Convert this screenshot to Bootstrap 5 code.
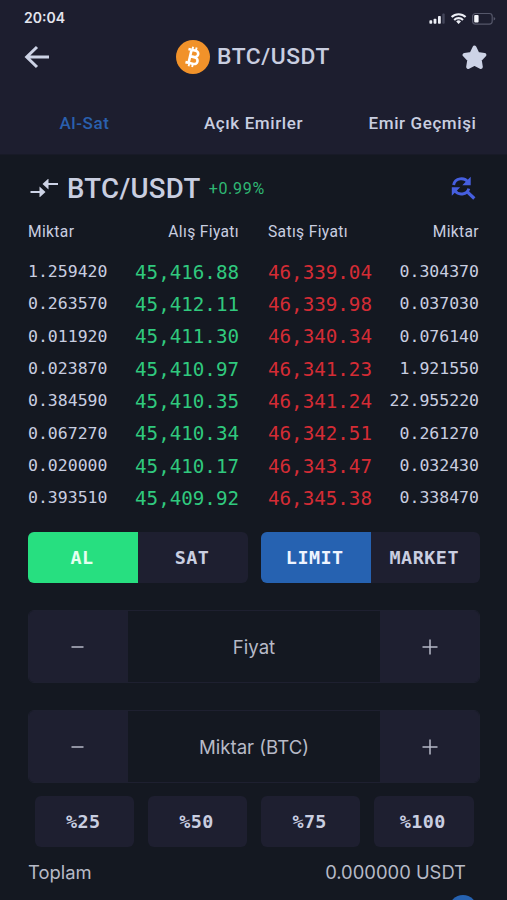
<!DOCTYPE html>
<html lang="tr">
<head>
<meta charset="utf-8">
<meta name="viewport" content="width=device-width, initial-scale=1">
<title>BTC/USDT</title>
<link href="https://cdn.jsdelivr.net/npm/bootstrap@5.3.0/dist/css/bootstrap.min.css" rel="stylesheet">
<style>
body{background:#141821;color:#c9cee0;font-family:Roboto,"Noto Sans",sans-serif;height:900px;overflow:hidden}
svg{display:block;flex:none}
.screen{height:900px;overflow:hidden}
.top-area{background:#1d1e2f;height:155px;border-bottom:1px solid #181a27}
.status{height:36px;padding:0 11px 0 24px;color:#e3e5ee}
.clock{font:600 14px/1 Inter,sans-serif}
.title-row{height:42px;padding:0 20px 0 24px}
.brand{margin-right:6px}
.title-text{font-size:22.8px;font-weight:500;line-height:1;letter-spacing:.55px;margin-left:7px;padding-top:1px}
.tabs-row{height:77px;padding-top:37px}
.tab-item{width:169px;font-size:17px;font-weight:500;letter-spacing:.6px;line-height:1;white-space:nowrap}
.tab-item.on{color:#2a60ae}
.book{padding:0 28px}
.pair-row{height:66px}
.pair-name{font-size:27.6px;font-weight:500;line-height:1;letter-spacing:.3px;margin-left:8px;padding-top:2px}
.change{font-size:16px;line-height:1;color:#2fb874;margin-left:8px;letter-spacing:.7px;padding-top:2px}
.halves{display:grid;grid-template-columns:211px 211px;column-gap:29px;align-items:center}
.heads{height:23px;font-size:15.6px;letter-spacing:.35px;line-height:1}
.levels{padding-top:12px}
.level{height:32.36px;font-family:"DejaVu Sans Mono",monospace;line-height:1;white-space:nowrap}
.qty{font-size:16.5px}
.bid,.ask{font-size:19.2px}
.bid{color:#30c97e}.ask{color:#d42c35}
.toggles{display:grid;grid-template-columns:220px 219px;gap:13px;padding:0 27px 0 28px;margin-top:17.5px}
.seg{height:51px;border-radius:6px;overflow:hidden;background:#1e1f30}
.seg>div{flex:1 1 0;width:50%;padding:1px 2px 0 0;font:700 18.4px/1 "DejaVu Sans Mono",monospace;letter-spacing:.5px}
.buy{background:#27df80;color:#e4fff0}
.limit{background:#2662b1;color:#eef4ff}
.stepper{height:73px;margin:27px 27px 0 28px;border:1px solid #1e2030;border-radius:6px;overflow:hidden}
.step{width:99px;background:#1e1f30}
.field{font:400 18.6px/1 Inter,sans-serif;color:#b7bac7}
.percents{display:grid;grid-template-columns:repeat(4,99.5px);gap:13.7px;padding-left:34.5px;margin-top:13px}
.pct{height:51px;border-radius:6px;background:#1e1f30;font:700 18.4px/1 "DejaVu Sans Mono",monospace;letter-spacing:.4px;padding:1px 2px 0 0}
.total{font:400 18.4px/1 Inter,sans-serif;color:#b7bac7;padding:2px 41px 0 28px;height:48px}
.fab{width:28px;height:28px;background:#2662b1;margin-left:449px}
</style>
</head>
<body>
<div class="screen">
<header class="top-area">
  <div class="status d-flex align-items-center justify-content-between">
    <span class="clock">20:04</span>
    <svg width="70" height="16" viewBox="0 0 70 16">
      <g fill="#eceef5"><rect x="3.4" y="10.2" width="2.8" height="3.6" rx=".8"/><rect x="7.6" y="8.8" width="2.8" height="5" rx=".8"/><rect x="12" y="6" width="2.8" height="7.8" rx=".8"/></g>
      <rect x="16.3" y="3.6" width="2.4" height="10.2" rx=".8" fill="#44465a"/>
      <g fill="none" stroke="#eceef5" stroke-width="2.1"><path d="M25.6 7.1a10 10 0 0 1 14 0"/><path d="M28.2 9.9a6.3 6.3 0 0 1 8.800 0"/></g>
      <path d="M32.600 14l-2.400-2.500a3.500 3.500 0 0 1 4.800 0z" fill="#eceef5"/>
      <rect x="46.600" y="3.500" width="19.600" height="10.600" rx="2.800" fill="none" stroke="#55576a" stroke-width="1.200"/>
      <rect x="48.200" y="5" width="4.400" height="7.600" rx="1" fill="#f4f5fa"/>
      <path d="M67.600 7v3.600q1.700-.5 1.700-1.800T67.600 7z" fill="#55576a"/>
    </svg>
  </div>
  <div class="title-row d-flex align-items-center justify-content-between">
    <svg width="26" height="24" viewBox="0 0 26 24" fill="none" stroke="#cdd3e6" stroke-width="3"><path d="M13 2L2.700 12 13 22M3 12h22"/></svg>
    <div class="brand d-flex align-items-center">
      <svg width="34" height="34" viewBox="0 0 34 34"><circle cx="17" cy="17" r="17" fill="#f1922a"/>
        <g transform="rotate(13 17 17)" fill="none" stroke="#fff"><path d="M10.800 10.300h3M10.800 23.700h3M14 10.300h4.300a3.100 3.100 0 0 1 0 6.300H14M14 17h5a3.300 3.300 0 0 1 0 6.700h-5M14 10.300v13.400" stroke-width="2.600"/><path d="M14.800 7v3M18.400 7v3M14.800 24v3M18.400 24v3" stroke-width="1.900"/></g></svg>
      <span class="title-text">BTC/USDT</span>
    </div>
    <svg width="25" height="25" viewBox="0 0 25 25"><path d="M12.500 2.600L15.500 8.900l6.900 1-4.700 4.900 1.100 7.100-6.300-3.100-6.300 3.100 1.100-7.100-4.700-4.900 6.900-1z" fill="#cdd3e6" stroke="#cdd3e6" stroke-width="4" stroke-linejoin="round"/></svg>
  </div>
  <nav class="tabs-row d-flex align-items-start">
    <div class="tab-item on text-center"><span>Al-Sat</span></div>
    <div class="tab-item text-center"><span>Açık Emirler</span></div>
    <div class="tab-item text-center"><span>Emir Geçmişi</span></div>
  </nav>
</header>
<main>
  <section class="book">
    <div class="pair-row d-flex align-items-center">
      <svg style="margin-left:2px" width="29" height="18" viewBox="0 0 29 18"><g fill="none" stroke="#cdd3e6" stroke-width="2.200"><path d="M.5 13H11M28 5H17"/></g><path d="M9.500 7.500l6 5.500-6 5.500zM18.500-.5L12.500 5l6 5.500z" fill="#cdd3e6"/></svg>
      <span class="pair-name">BTC/USDT</span><span class="change">+0.99%</span>
      <svg class="ms-auto" style="margin-right:3px" width="25" height="24" viewBox="0 0 25 24"><g fill="none" stroke="#465fe0" stroke-width="2.900"><path d="M2.600 9C4 1.800 13.500.8 17.200 6.500M17.800 12.600c-1.700 6.300-10.700 7.300-14 2"/><path d="M16.300 15.800l7 6.700" stroke-width="3.200"/></g><path d="M19.700.8v8.400h-8.400zM.800 19.800v-8.600h8.400z" fill="#465fe0"/></svg>
    </div>
    <div class="halves heads">
      <div class="d-flex justify-content-between"><span>Miktar</span><span>Alış Fiyatı</span></div>
      <div class="d-flex justify-content-between"><span>Satış Fiyatı</span><span>Miktar</span></div>
    </div>
    <div class="levels">
      <div class="halves level"><div class="d-flex justify-content-between align-items-center"><span class="qty">1.259420</span><span class="bid">45,416.88</span></div><div class="d-flex justify-content-between align-items-center"><span class="ask">46,339.04</span><span class="qty">0.304370</span></div></div>
      <div class="halves level"><div class="d-flex justify-content-between align-items-center"><span class="qty">0.263570</span><span class="bid">45,412.11</span></div><div class="d-flex justify-content-between align-items-center"><span class="ask">46,339.98</span><span class="qty">0.037030</span></div></div>
      <div class="halves level"><div class="d-flex justify-content-between align-items-center"><span class="qty">0.011920</span><span class="bid">45,411.30</span></div><div class="d-flex justify-content-between align-items-center"><span class="ask">46,340.34</span><span class="qty">0.076140</span></div></div>
      <div class="halves level"><div class="d-flex justify-content-between align-items-center"><span class="qty">0.023870</span><span class="bid">45,410.97</span></div><div class="d-flex justify-content-between align-items-center"><span class="ask">46,341.23</span><span class="qty">1.921550</span></div></div>
      <div class="halves level"><div class="d-flex justify-content-between align-items-center"><span class="qty">0.384590</span><span class="bid">45,410.35</span></div><div class="d-flex justify-content-between align-items-center"><span class="ask">46,341.24</span><span class="qty">22.955220</span></div></div>
      <div class="halves level"><div class="d-flex justify-content-between align-items-center"><span class="qty">0.067270</span><span class="bid">45,410.34</span></div><div class="d-flex justify-content-between align-items-center"><span class="ask">46,342.51</span><span class="qty">0.261270</span></div></div>
      <div class="halves level"><div class="d-flex justify-content-between align-items-center"><span class="qty">0.020000</span><span class="bid">45,410.17</span></div><div class="d-flex justify-content-between align-items-center"><span class="ask">46,343.47</span><span class="qty">0.032430</span></div></div>
      <div class="halves level"><div class="d-flex justify-content-between align-items-center"><span class="qty">0.393510</span><span class="bid">45,409.92</span></div><div class="d-flex justify-content-between align-items-center"><span class="ask">46,345.38</span><span class="qty">0.338470</span></div></div>
    </div>
  </section>
  <div class="toggles">
    <div class="seg d-flex"><div class="buy d-flex align-items-center justify-content-center">AL</div><div class="d-flex align-items-center justify-content-center">SAT</div></div>
    <div class="seg d-flex"><div class="limit d-flex align-items-center justify-content-center">LIMIT</div><div class="d-flex align-items-center justify-content-center">MARKET</div></div>
  </div>
  <div class="stepper d-flex">
    <div class="step d-flex align-items-center justify-content-center"><svg class="me-1" width="14" height="16" viewBox="0 0 14 16"><path d="M1.500 8h12" stroke="#b7bac7" stroke-width="1.500"/></svg></div>
    <div class="field flex-grow-1 d-flex align-items-center justify-content-center">Fiyat</div>
    <div class="step d-flex align-items-center justify-content-center"><svg width="16" height="16" viewBox="0 0 16 16"><path d="M.5 8h15M8 .5v15" stroke="#b7bac7" stroke-width="1.500"/></svg></div>
  </div>
  <div class="stepper d-flex">
    <div class="step d-flex align-items-center justify-content-center"><svg class="me-1" width="14" height="16" viewBox="0 0 14 16"><path d="M1.500 8h12" stroke="#b7bac7" stroke-width="1.500"/></svg></div>
    <div class="field flex-grow-1 d-flex align-items-center justify-content-center">Miktar (BTC)</div>
    <div class="step d-flex align-items-center justify-content-center"><svg width="16" height="16" viewBox="0 0 16 16"><path d="M.5 8h15M8 .5v15" stroke="#b7bac7" stroke-width="1.500"/></svg></div>
  </div>
  <div class="percents">
    <div class="pct d-flex align-items-center justify-content-center">%25</div>
    <div class="pct d-flex align-items-center justify-content-center">%50</div>
    <div class="pct d-flex align-items-center justify-content-center">%75</div>
    <div class="pct d-flex align-items-center justify-content-center">%100</div>
  </div>
  <div class="total d-flex align-items-center justify-content-between"><span>Toplam</span><span>0.000000 USDT</span></div>
  <div class="fab rounded-circle"></div>
</main>
</div>
<script src="https://cdn.jsdelivr.net/npm/bootstrap@5.3.0/dist/js/bootstrap.bundle.min.js"></script>
</body>
</html>
